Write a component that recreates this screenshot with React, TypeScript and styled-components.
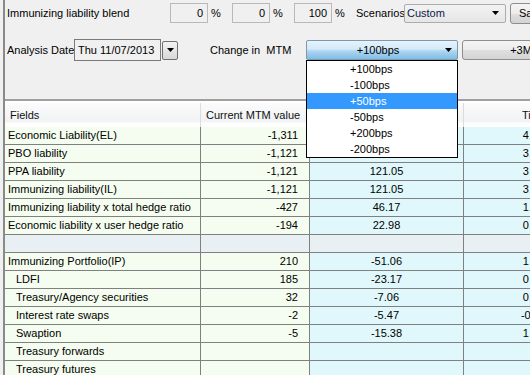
import * as React from "react"
import styled, { createGlobalStyle } from "styled-components"

const GlobalStyle = createGlobalStyle`
  html, body {
    margin: 0;
    padding: 0;
    background: #f0f0f0;
    overflow: hidden;
  }
  body {
    font-family: "Liberation Sans", Arial, sans-serif;
    font-size: 11px;
    color: #000;
  }
`

const Window = styled.div`
  width: 530px;
  height: 375px;
  overflow: hidden;
  box-sizing: border-box;
  padding-left: 3px;
  background: #f0f0f0;
`

const Panel = styled.div`
  height: 100%;
  border-left: 2px solid #8a8a8a;
  display: flex;
  flex-direction: column;
`

const Controls = styled.div`
  height: 99px;
  flex: none;
  box-sizing: border-box;
  padding: 3px 0 0 2px;
  display: flex;
  flex-direction: column;
  gap: 16px;
`

const Row = styled.div<{ $h: number }>`
  display: flex;
  align-items: center;
  height: ${(p) => p.$h}px;
  white-space: nowrap;
`

const Label = styled.span<{ $w: number; $ml?: number }>`
  flex: none;
  width: ${(p) => p.$w}px;
  margin-left: ${(p) => p.$ml ?? 0}px;
`

const PctBox = styled.div`
  flex: none;
  width: 38px;
  height: 20px;
  box-sizing: border-box;
  border: 1px solid #b9b9b9;
  background: #f0f0f0;
  text-align: right;
  padding-right: 4px;
  line-height: 18px;
`

const Pct = styled.span`
  flex: none;
  width: 24px;
  box-sizing: border-box;
  padding-left: 3px;
`

const Select = styled.div`
  flex: none;
  width: 102px;
  height: 19px;
  box-sizing: border-box;
  border: 1px solid #acacac;
  border-radius: 2px;
  background: linear-gradient(#f3f3f3, #e6e6e6);
  color: #0a1a4a;
  padding: 0 6px 0 2px;
  display: flex;
  align-items: center;
  justify-content: space-between;
`

const Button = styled.div<{ $w: number; $h: number }>`
  flex: none;
  width: ${(p) => p.$w}px;
  height: ${(p) => p.$h}px;
  margin-left: 4px;
  box-sizing: border-box;
  border: 1px solid #8e8e8e;
  border-radius: 3px;
  background: linear-gradient(#f4f4f4 0%, #ececec 50%, #dfdfdf 51%, #d3d3d3 100%);
  display: flex;
  align-items: center;
  justify-content: center;
`

const DateBox = styled.div`
  flex: none;
  width: 87px;
  height: 22px;
  box-sizing: border-box;
  border: 1px solid #7a7a7a;
  background: #f0f0f0;
  padding-left: 3px;
  line-height: 20px;
`

const DateButton = styled.div`
  flex: none;
  width: 16px;
  height: 19px;
  margin-left: 1px;
  box-sizing: border-box;
  border: 1px solid #707070;
  border-radius: 2px;
  background: linear-gradient(#f2f2f2, #d8d8d8);
  display: flex;
  align-items: center;
  justify-content: center;
`

const ComboWrap = styled.div`
  position: relative;
  flex: none;
  width: 152px;
  height: 20px;
`

const Combo = styled.div`
  height: 100%;
  box-sizing: border-box;
  border: 1px solid #7d99ad;
  border-radius: 2px;
  background: linear-gradient(#e6f3fb 0%, #d3eaf8 45%, #aed6f1 55%, #7fbde6 100%);
  display: flex;
  align-items: center;
  padding-right: 5px;
`

const ComboText = styled.span`
  flex: 1;
  text-align: center;
  padding-left: 4px;
`

const List = styled.ul`
  position: absolute;
  top: 100%;
  left: 0;
  width: 152px;
  margin: 0;
  padding: 0;
  list-style: none;
  box-sizing: border-box;
  border: 1px solid #000;
  background: #fff;
  z-index: 5;
`

const Item = styled.li<{ $active?: boolean }>`
  height: 16px;
  line-height: 16px;
  padding-left: 43px;
  background: ${(p) => (p.$active ? "#3399ff" : "transparent")};
  color: ${(p) => (p.$active ? "#fff" : "#000")};
`

const Table = styled.div`
  flex: 1;
  border-top: 2px solid #a0a0a0;
  padding-top: 2px;
  background: #fff;
  overflow: hidden;
`

const cols = "196px 109px 154px 140px"

const HeadRow = styled.div`
  display: grid;
  grid-template-columns: ${cols};
  height: 24px;
  background: linear-gradient(#fbfbfc 0%, #f1f2f4 75%, #fdfdfd 85%, #fff 100%);
`

const HeadCell = styled.div<{ $align: string }>`
  border-right: 1px solid #dcdcdc;
  padding: 0 4px 0 5px;
  line-height: 25px;
  text-align: ${(p) => p.$align};
  color: #111;
  white-space: nowrap;
  overflow: hidden;
`

const BodyRow = styled.div`
  display: grid;
  grid-template-columns: ${cols};
  height: 18px;
`

type Tone = "green" | "blue" | "blank"

const toneBg: Record<Tone, string> = {
  green: "#f4fdef",
  blue: "#e0f8fc",
  blank: "#e9f0f3",
}

const Cell = styled.div<{ $tone: Tone; $align: string; $pl?: number }>`
  box-sizing: border-box;
  height: 18px;
  border-right: 1px solid #808080;
  border-bottom: 1px solid #808080;
  background: ${(p) => toneBg[p.$tone]};
  text-align: ${(p) => p.$align};
  padding: 0 11px 0 ${(p) => p.$pl ?? 0}px;
  line-height: 17px;
  white-space: nowrap;
  overflow: hidden;
`

const Caret: React.FC = () => (
  <svg width="7" height="4" viewBox="0 0 7 4">
    <path d="M0 0h7L3.5 4z" fill="#000" />
  </svg>
)

type Line = {
  field?: string
  mtm?: string
  change?: string
  tail?: string
  indent?: boolean
  blank?: boolean
}

// the first two "change" values sit under the open scenario list
const lines: Line[] = [
  { field: "Economic Liability(EL)", mtm: "-1,311", tail: "4.21" },
  { field: "PBO liability", mtm: "-1,121", tail: "3.50" },
  { field: "PPA liability", mtm: "-1,121", change: "121.05", tail: "3.50" },
  { field: "Immunizing liability(IL)", mtm: "-1,121", change: "121.05", tail: "3.50" },
  { field: "Immunizing liability x total hedge ratio", mtm: "-427", change: "46.17", tail: "1.63" },
  { field: "Economic liability x user hedge ratio", mtm: "-194", change: "22.98", tail: "0.81" },
  { blank: true },
  { field: "Immunizing Portfolio(IP)", mtm: "210", change: "-51.06", tail: "1.94" },
  { field: "LDFI", mtm: "185", change: "-23.17", tail: "0.88", indent: true },
  { field: "Treasury/Agency securities", mtm: "32", change: "-7.06", tail: "0.27", indent: true },
  { field: "Interest rate swaps", mtm: "-2", change: "-5.47", tail: "-0.21", indent: true },
  { field: "Swaption", mtm: "-5", change: "-15.38", tail: "1.04", indent: true },
  { field: "Treasury forwards", indent: true },
  { field: "Treasury futures", indent: true },
]

const scenarios = ["+100bps", "-100bps", "+50bps", "-50bps", "+200bps", "-200bps"]

const App: React.FC = () => (
  <Window>
    <GlobalStyle />
    <Panel>
      <Controls>
        <Row $h={20}>
          <Label $w={163}>Immunizing liability blend</Label>
          <PctBox>0</PctBox>
          <Pct>%</Pct>
          <PctBox>0</PctBox>
          <Pct>%</Pct>
          <PctBox>100</PctBox>
          <Pct>%</Pct>
          <Label $w={48}>Scenarios</Label>
          <Select>
            <span>Custom</span>
            <Caret />
          </Select>
          <Button $w={43} $h={21}>Save</Button>
        </Row>
        <Row $h={22}>
          <Label $w={67}>Analysis Date</Label>
          <DateBox>Thu 11/07/2013</DateBox>
          <DateButton>
            <Caret />
          </DateButton>
          <Label $w={96} $ml={32}>Change in&nbsp; MTM</Label>
          <ComboWrap>
            <Combo>
              <ComboText>+100bps</ComboText>
              <Caret />
            </Combo>
            <List>
              {scenarios.map((s) => (
                <Item key={s} $active={s === "+50bps"}>
                  {s}
                </Item>
              ))}
            </List>
          </ComboWrap>
          <Button $w={118} $h={20}>+3M</Button>
        </Row>
      </Controls>
      <Table>
        <HeadRow>
          <HeadCell $align="left">Fields</HeadCell>
          <HeadCell $align="left">Current MTM value</HeadCell>
          <HeadCell $align="center" />
          <HeadCell $align="center">Time</HeadCell>
        </HeadRow>
        {lines.map((l, i) => {
          const green: Tone = l.blank ? "blank" : "green"
          const blue: Tone = l.blank ? "blank" : "blue"
          return (
            <BodyRow key={i}>
              <Cell $tone={green} $align="left" $pl={l.indent ? 11 : 3}>
                {l.field}
              </Cell>
              <Cell $tone={green} $align="right">{l.mtm}</Cell>
              <Cell $tone={blue} $align="center" $pl={11}>{l.change}</Cell>
              <Cell $tone={blue} $align="center" $pl={11}>{l.tail}</Cell>
            </BodyRow>
          )
        })}
      </Table>
    </Panel>
  </Window>
)

export default App
